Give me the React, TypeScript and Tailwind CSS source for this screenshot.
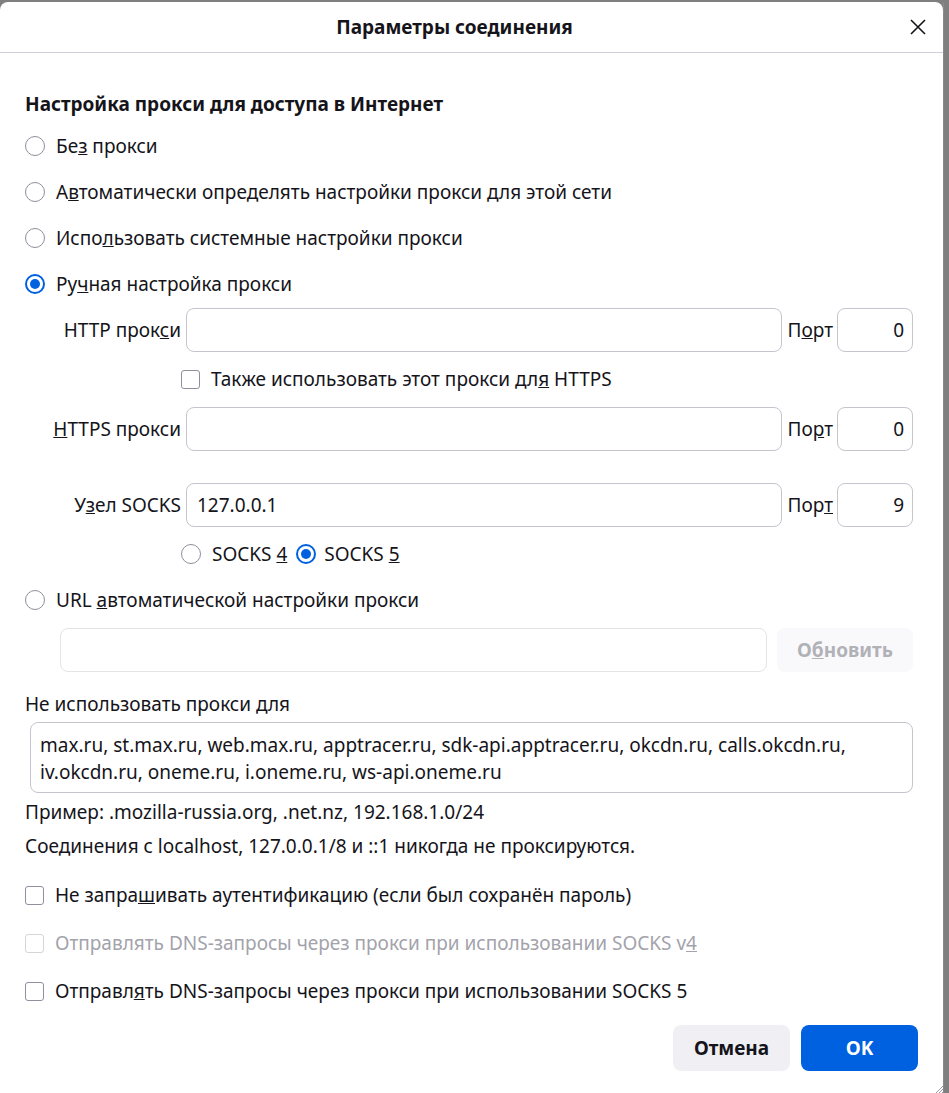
import React from "react";

const font = { fontFamily: '"Noto Sans", "Open Sans", sans-serif' };

function Radio({ checked = false }: { checked?: boolean }) {
  return checked ? (
    <span className="flex h-[20px] w-[20px] shrink-0 items-center justify-center rounded-full border-2 border-[#0061e0] bg-white">
      <span className="h-[10px] w-[10px] rounded-full bg-[#0061e0]" />
    </span>
  ) : (
    <span className="h-[20px] w-[20px] shrink-0 rounded-full border border-[#8f8f9d] bg-white" />
  );
}

function Checkbox({ disabled = false }: { disabled?: boolean }) {
  return (
    <span
      className={`h-[19px] w-[19px] shrink-0 rounded-[3px] border bg-white ${
        disabled ? "border-[#d4d4da]" : "border-[#8f8f9d]"
      }`}
    />
  );
}

function RadioRow({ checked, children }: { checked?: boolean; children: React.ReactNode }) {
  return (
    <div className="flex h-[46px] items-center gap-[11px]">
      <Radio checked={checked} />
      <span>{children}</span>
    </div>
  );
}

function ProxyRow({
  label,
  value,
  port,
  portLabel,
}: {
  label: React.ReactNode;
  value?: string;
  port: string;
  portLabel: React.ReactNode;
}) {
  return (
    <div className="flex h-[44px] items-stretch">
      <div className="flex w-[156px] items-center justify-end whitespace-nowrap">{label}</div>
      <div className="ml-[5px] flex flex-1 items-center rounded-[8px] border border-[#c5c5cf] px-[10px]">
        {value}
      </div>
      <div className="ml-[6px] flex items-center">{portLabel}</div>
      <div className="ml-[4px] flex w-[76px] items-center justify-end rounded-[8px] border border-[#c5c5cf] px-[8px]">
        {port}
      </div>
    </div>
  );
}

function CheckRow({ disabled, children }: { disabled?: boolean; children: React.ReactNode }) {
  return (
    <div className={`flex h-[48px] items-center gap-[11px] ${disabled ? "text-[#a3a3ab]" : ""}`}>
      <Checkbox disabled={disabled} />
      <span>{children}</span>
    </div>
  );
}

export default function App() {
  return (
    <div className="flex h-[1093px] w-[949px] bg-[#7f7f7f] pt-[2px] text-[19px] text-[#15141a]" style={font}>
      <div className="relative flex w-[943px] flex-col rounded-t-[8px] bg-white">
        {/* title bar */}
        <div className="flex h-[51px] shrink-0 items-center border-b border-[#cfcfd8]">
          <div className="flex-1 text-center text-[19px] font-bold">Параметры соединения</div>
          <div className="flex w-[34px] items-center">
            <svg width="16" height="16" viewBox="0 0 16 16" className="ml-[1px]">
              <path d="M1 1L15 15M15 1L1 15" stroke="#15141a" strokeWidth="1.6" />
            </svg>
          </div>
        </div>

        <div className="flex flex-1 flex-col pl-[25px] pr-[30px]">
          <div className="mt-[36px] flex h-[30px] items-center font-bold">
            Настройка прокси для доступа в Интернет
          </div>

          <div className="mt-[4px]">
            <RadioRow>
              Бе<u>з</u> прокси
            </RadioRow>
            <RadioRow>
              А<u>в</u>томатически определять настройки прокси для этой сети
            </RadioRow>
            <RadioRow>
              Испо<u>л</u>ьзовать системные настройки прокси
            </RadioRow>
            <RadioRow checked>
              Ру<u>ч</u>ная настройка прокси
            </RadioRow>
          </div>

          <div className="mt-[1px]">
            <ProxyRow
              label={
                <span>
                  HTTP прок<u>с</u>и
                </span>
              }
              port="0"
              portLabel={
                <span>
                  П<u>о</u>рт
                </span>
              }
            />
            <div className="flex h-[55px] items-center gap-[11px] pl-[156px]">
              <Checkbox />
              <span>
                Также использовать этот прокси дл<u>я</u> HTTPS
              </span>
            </div>
            <ProxyRow
              label={
                <span>
                  <u>H</u>TTPS прокси
                </span>
              }
              port="0"
              portLabel={
                <span>
                  По<u>р</u>т
                </span>
              }
            />
            <div className="mt-[32px]">
              <ProxyRow
                label={
                  <span>
                    У<u>з</u>ел SOCKS
                  </span>
                }
                value="127.0.0.1"
                port="9"
                portLabel={
                  <span>
                    Пор<u>т</u>
                  </span>
                }
              />
            </div>
            <div className="flex h-[54px] items-center pl-[156px]">
              <Radio />
              <span className="ml-[11px]">
                SOCKS <u>4</u>
              </span>
              <span className="ml-[9px]">
                <Radio checked />
              </span>
              <span className="ml-[8px]">
                SOCKS <u>5</u>
              </span>
            </div>
          </div>

          <div className="flex h-[38px] items-center gap-[11px]">
            <Radio />
            <span>
              URL <u>а</u>втоматической настройки прокси
            </span>
          </div>

          <div className="mt-[9px] flex h-[44px] gap-[10px] pl-[35px]">
            <div className="flex-1 rounded-[8px] border border-[#e3e3e8]" />
            <div className="flex w-[136px] items-center justify-center rounded-[8px] bg-[#f9f9fb] font-bold text-[#b1b1b8]">
              О<u>б</u>новить
            </div>
          </div>

          <div className="mt-[18px] flex h-[28px] items-center">
            <span>
              Не использовать прокси <u>д</u>ля
            </span>
          </div>
          <div className="ml-[5px] mt-[4px] h-[71px] rounded-[8px] border border-[#c5c5cf] px-[9px] pt-[9px] leading-[27px]">
            max.ru, st.max.ru, web.max.ru, apptracer.ru, sdk-api.apptracer.ru, okcdn.ru, calls.okcdn.ru,
            iv.okcdn.ru, oneme.ru, i.oneme.ru, ws-api.oneme.ru
          </div>
          <div className="mt-[5px] flex h-[28px] items-center">Пример: .mozilla-russia.org, .net.nz, 192.168.1.0/24</div>
          <div className="mt-[6px] flex h-[28px] items-center">
            Соединения с localhost, 127.0.0.1/8 и ::1 никогда не проксируются.
          </div>

          <div className="mt-[11px]">
            <CheckRow>
              Не запра<u>ш</u>ивать аутентификацию (если был сохранён пароль)
            </CheckRow>
            <CheckRow disabled>
              Отправлять DNS-запросы через прокси при использовании SOCKS v<u>4</u>
            </CheckRow>
            <CheckRow>
              Отправл<u>я</u>ть DNS-запросы через прокси при использовании SOCKS 5
            </CheckRow>
          </div>

          <div className="-mr-[5px] mt-[10px] flex justify-end gap-[11px]">
            <button className="h-[46px] w-[117px] rounded-[8px] bg-[#f0f0f4] font-bold">Отмена</button>
            <button className="h-[46px] w-[117px] rounded-[8px] bg-[#0061e0] font-bold text-white">OK</button>
          </div>
        </div>

        {/* resize grip */}
        <svg width="8" height="8" viewBox="0 0 8 8" className="absolute bottom-0 right-0">
          <path d="M8 1L1 8M8 4L4 8M8 7L7 8" stroke="#9a9aa2" strokeWidth="1" />
        </svg>
      </div>
      <div className="flex-1 border-l border-[#8a8a8a] bg-[#7f7f7f]" />
    </div>
  );
}
